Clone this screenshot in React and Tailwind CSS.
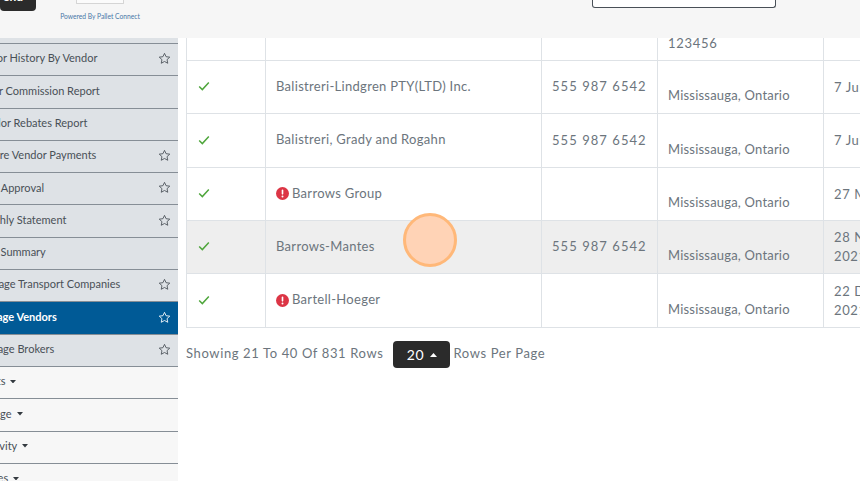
import React from "react";

function Star({ white }) {
  return (
    <svg width="13" height="13" viewBox="0 0 24 24" fill="none" stroke={white ? "#ffffff" : "#495057"} strokeWidth="1.6" strokeLinejoin="round" className="shrink-0">
      <path d="M12 2.5l2.9 6.2 6.8.8-5 4.6 1.3 6.7-6-3.3-6 3.3 1.3-6.7-5-4.6 6.8-.8z" />
    </svg>
  );
}

function Caret({ up, white, small }) {
  return (
    <svg width={small ? 6 : 7} height={small ? 3.5 : 4} viewBox="0 0 7 4" className="shrink-0" fill={white ? "#ffffff" : "#343a40"}>
      <path d={up ? "M0 4L3.5 0L7 4z" : "M0 0L3.5 4L7 0z"} />
    </svg>
  );
}

function Check() {
  return (
    <svg width="14" height="14" viewBox="0 0 16 16" fill="none" stroke="#4fa63c" strokeWidth="1.7" className="shrink-0">
      <path d="M2.5 8.5l3.6 3.6 7.4-8" />
    </svg>
  );
}

function Alert() {
  return (
    <svg width="13" height="13" viewBox="0 0 16 16" className="shrink-0">
      <circle cx="8" cy="8" r="8" fill="#dc3545" />
      <rect x="7" y="3.2" width="2" height="6.2" rx="1" fill="#fff" />
      <circle cx="8" cy="11.8" r="1.2" fill="#fff" />
    </svg>
  );
}

const sideItems = [
  { t: "Vendor History By Vendor", ml: "-ml-[28px]", star: true },
  { t: "Vendor Commission Report", ml: "-ml-[32px]" },
  { t: "Vendor Rebates Report", ml: "-ml-[24px]" },
  { t: "Prepare Vendor Payments", ml: "-ml-[28px]", star: true },
  { t: "Vendor Plan Approval", ml: "-ml-[60px]", star: true },
  { t: "Vendor Monthly Statement", ml: "-ml-[64px]", star: true },
  { t: "Vendor Summary", ml: "-ml-[37px]" },
  { t: "Manage Transport Companies", ml: "-ml-[23px]", star: true },
  { t: "Manage Vendors", ml: "-ml-[25px]", star: true, active: true },
  { t: "Manage Brokers", ml: "-ml-[24px]", star: true },
  { t: "Reports", ml: "-ml-[32px]", caret: true, plain: true },
  { t: "Manage", ml: "-ml-[27px]", caret: true, plain: true },
  { t: "Activity", ml: "-ml-[20px]", caret: true, plain: true },
  { t: "Invoices", ml: "-ml-[31px]", caret: true, plain: true },
];

const rows = [
  { name: "Balistreri-Lindgren PTY(LTD) Inc.", phone: "555 987 6542", d: ["7 Jul"], h: "h-[53px]" },
  { name: "Balistreri, Grady and Rogahn", phone: "555 987 6542", d: ["7 Jul"], h: "h-[54px]" },
  { name: "Barrows Group", alert: true, phone: "", d: ["27 May"], h: "h-[53px]" },
  { name: "Barrows-Mantes", phone: "555 987 6542", d: ["28 Nov", "2021"], h: "h-[53px]", hover: true },
  { name: "Bartell-Hoeger", alert: true, phone: "", d: ["22 Dec", "2021"], h: "h-[53px]" },
];

export default function App() {
  return (
    <div className="relative h-[481px] w-[860px] overflow-hidden bg-white text-[#6c757d] font-['Lato',sans-serif]">
      <header className="relative z-10 flex h-[38px] items-start bg-[#f6f6f6]">
        <div className="-mt-[17px] flex h-[28px] w-[36px] items-center justify-end overflow-hidden rounded-b-[4px] bg-[#2b2b2b] pr-[13px] text-[12px] font-bold text-white">
          <span>end</span>
        </div>
        <div className="ml-[24px] flex w-[80px] flex-col items-center">
          <div className="h-[4px] w-[48px] rounded-b-[1px] border border-t-0 border-[#d5d5d5] bg-[#fbfbfb]" />
          <div className="mt-[8px] whitespace-nowrap text-[6.7px] leading-[9px] text-[#4a78a8]">Powered By Pallet Connect</div>
        </div>
        <div className="ml-[452px] h-[8px] w-[184px] rounded-b-[3px] border border-t-0 border-[#495057] bg-white" />
      </header>

      <div className="flex items-start">
        <aside className="w-[178px] shrink-0 bg-[#dee2e6] pt-[5px] text-[11px] text-[#495057]">
          {sideItems.map((s) => (
            <div
              key={s.t}
              className={`flex h-[32.3px] items-center overflow-hidden border-t border-[#868e96] pb-[2px] pr-[7px] ${s.active ? "bg-[#005a96] font-bold text-white" : s.plain ? "bg-[#f7f7f7]" : ""}`}
            >
              <span className={`${s.ml} whitespace-nowrap ${s.caret ? "" : "flex-1"}`}>{s.t}</span>
              {s.caret && <span className="ml-[5px]"><Caret small /></span>}
              {s.star && <Star white={s.active} />}
            </div>
          ))}
        </aside>

        <main className="ml-[8px] min-w-0 flex-1 overflow-hidden">
          <div className="w-[760px] border-x border-b border-[#dee2e6] text-[13px] tracking-[0.3px]">
            <div className="grid h-[23px] grid-cols-[78px_276px_116px_166px_1fr] overflow-hidden border-b border-[#dee2e6]">
              <div />
              <div className="border-l border-[#dee2e6]" />
              <div className="border-l border-[#dee2e6]" />
              <div className="-mt-[4px] border-l border-[#dee2e6] pl-[10px] tracking-[0.7px]">123456</div>
              <div className="border-l border-[#dee2e6]" />
            </div>
            {rows.map((r) => (
              <div key={r.name} className={`grid ${r.h} grid-cols-[78px_276px_116px_166px_1fr] border-b border-[#dee2e6] last:border-b-0 ${r.hover ? "bg-[#eeeeee]" : ""}`}>
                <div className="flex items-center pb-[2px] pl-[10px]"><Check /></div>
                <div className="flex items-center gap-[3px] border-l border-[#dee2e6] pb-[1px] pl-[10px]">
                  {r.alert && <Alert />}
                  <span>{r.name}</span>
                </div>
                <div className="flex items-center border-l border-[#dee2e6] pl-[10px] tracking-[1.05px]">{r.phone}</div>
                <div className="flex items-end border-l border-[#dee2e6] pb-[8px] pl-[10px] tracking-[0.2px]">Mississauga, Ontario</div>
                <div className="flex flex-col justify-center border-l border-[#dee2e6] pl-[10px] leading-[19px] tracking-[0.6px]">
                  {r.d.map((x) => <div key={x} className="whitespace-nowrap">{x}</div>)}
                </div>
              </div>
            ))}
          </div>
          <div className="mt-[13px] flex items-center text-[13px] tracking-[0.62px]">
            <span className="mb-[2px]">Showing 21 To 40 Of 831 Rows</span>
            <span className="ml-[10px] flex h-[27px] w-[57px] items-center justify-center gap-[6px] rounded-[4px] bg-[#2b2b2b] text-[14px] text-white">
              20 <Caret up white />
            </span>
            <span className="mb-[2px] ml-[3px]">Rows Per Page</span>
          </div>
        </main>
      </div>

      <div className="absolute left-[403px] top-[213px] h-[54px] w-[54px] rounded-full border-[3px] border-[#ffb879] bg-[#ffd3b6]" />
    </div>
  );
}
